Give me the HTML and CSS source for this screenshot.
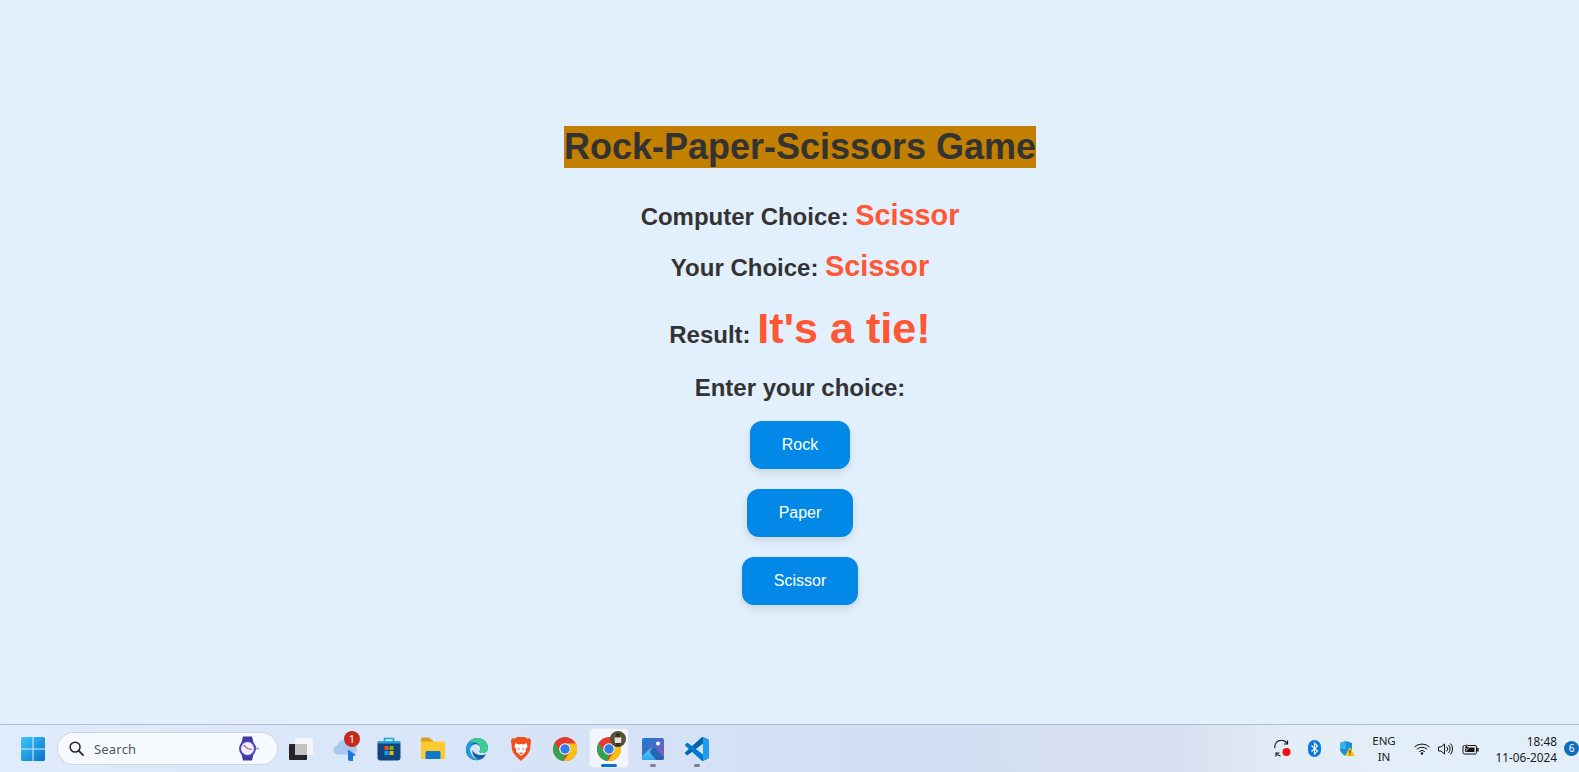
FILE: index.html
```html
<!DOCTYPE html>
<html lang="en">
<head>
<meta charset="utf-8">
<title>Rock-Paper-Scissors Game</title>
<link rel="stylesheet" href="styles.css">
</head>
<body>
<main class="game">
  <h1 class="title">Rock-Paper-Scissors Game</h1>
  <p class="line line-computer">Computer Choice: <span class="val">Scissor</span></p>
  <p class="line line-your">Your Choice: <span class="val">Scissor</span></p>
  <p class="line line-result">Result: <span class="val val-big">It's a tie!</span></p>
  <p class="line line-enter">Enter your choice:</p>
  <div class="buttons">
    <button class="btn">Rock</button>
    <button class="btn">Paper</button>
    <button class="btn">Scissor</button>
  </div>
</main>
<footer class="taskbar">
  <div class="left">
    <svg class="ico start" viewBox="0 0 24 24"><defs><linearGradient id="w" x1="0" y1="0" x2="1" y2="1"><stop offset="0" stop-color="#3cc6f8"/><stop offset="1" stop-color="#0a72cf"/></linearGradient></defs><path fill="url(#w)" d="M0 1.500A1.500 1.500 0 0 1 1.500 0H11.500V11.500H0zM12.500 0H22.500A1.500 1.500 0 0 1 24 1.500V11.500H12.500zM0 12.500H11.500V24H1.500A1.500 1.500 0 0 1 0 22.500zM12.500 12.500H24V22.500A1.500 1.500 0 0 1 22.500 24H12.500z"/></svg>
    <div class="search">
      <svg class="mag" viewBox="0 0 16 16"><circle cx="6.500" cy="6.500" r="5.300" fill="none" stroke="#222" stroke-width="1.600"/><path d="M10.300 10.300 15 15" stroke="#222" stroke-width="1.800" stroke-linecap="round"/></svg>
      <span class="search-text">Search</span>
      <svg class="watch" viewBox="0 0 21 25"><path fill="#3e3a9e" d="M5 .5h9l1.500 6h-12zM3.500 18.500h12L14 24.500H5z"/><circle cx="9.500" cy="12.500" r="8.500" fill="#4a46b8"/><circle cx="9.500" cy="12.500" r="6.500" fill="#f3eefa"/><path d="M5.500 9 9.500 12.500 14 13.500" fill="none" stroke="#c04a80" stroke-width="1.200"/><rect x="18" y="11.500" width="3" height="2" fill="#a5a3e0"/></svg>
    </div>
    <span class="item">
      <svg class="taskview" viewBox="0 0 24 22"><rect x="6" y="0" width="18" height="17" rx="1" fill="#f5f5f7"/><rect x="0" y="6" width="18" height="16" rx="1" fill="#252525"/><path d="M6 6H18V17H6z" fill="#c2c2c4"/></svg>
    </span>
    <span class="item">
      <svg class="ico" viewBox="0 0 24 24"><path fill="#a9c8ef" d="M5 17.500a4.500 4.500 0 0 1-.500-9A7 7 0 0 1 17.500 7a5.300 5.300 0 0 1 2 10.500z"/><path fill="#1d78dc" d="M15 12.500l8 5.500-3 1.200V24h-3a2 2 0 0 1-2-2z"/></svg>
      <span class="notif">1</span>
    </span>
    <span class="item">
      <svg class="ico" viewBox="0 0 24 24"><path fill="none" stroke="#27a4d8" stroke-width="1.600" d="M7.500 5V1.500h9V5"/><rect x="0.500" y="4" width="23" height="19.500" rx="3" fill="#11457e"/><rect x="0.500" y="4" width="23" height="2.500" rx="1" fill="#27a4d8"/><rect x="7.500" y="9" width="4" height="4" fill="#f25022"/><rect x="12.500" y="9" width="4" height="4" fill="#7fba00"/><rect x="7.500" y="14" width="4" height="4" fill="#00a4ef"/><rect x="12.500" y="14" width="4" height="4" fill="#ffb900"/></svg>
    </span>
    <span class="item">
      <svg class="ico" viewBox="0 0 24 24"><path fill="#d9a21a" d="M0 2A1.500 1.500 0 0 1 1.500 .5h6.500l3 2.500H12V7H0z"/><path fill="#fcc92f" d="M0 4.500h22.500A1.500 1.500 0 0 1 24 6V20.500A1.500 1.500 0 0 1 22.500 22H1.500A1.500 1.500 0 0 1 0 20.500z"/><path fill="#0f78c8" d="M4.500 15.500A1.500 1.500 0 0 1 6 14H18a1.500 1.500 0 0 1 1.500 1.500V22h-15z"/></svg>
    </span>
    <span class="item">
      <svg class="ico" viewBox="0 0 24 24"><path fill="#0e64b4" d="M1 13C1 6 5.800 1 12.200 1 18.500 1 23 5.600 23 11c0 3.300-2.600 5-5.200 5-1.800 0-3.400-.700-3.400-1.600 0-.500 1-1 1-2.800 0-2.700-2.200-4.300-4.600-4.300C7.500 7.300 5 9.800 5 13c0 4.500 3.800 9.800 9.800 9.800-1 .300-1.800.400-2.800.400C5.500 23.200 1 18.800 1 13z"/><path fill="#3ccf91" d="M3 6.500C5 3 8.500 1 12.200 1 18.500 1 23 5.600 23 11c0 3.300-2.600 5-5.200 5-1.800 0-3.400-.700-3.400-1.600 0-.500 1-1 1-2.800 0-3.500-3.300-6.800-7.500-6.300C6 5.600 4.300 6 3 6.500z"/><path fill="#1b9de2" d="M3 6.500C5.500 4.700 8 4.800 10 5.500 7 6.200 5 9.300 5 13c0 4.500 3.800 9.800 9.800 9.800C8 24.500 1 19.500 1 13c0-2.500 .800-4.800 2-6.500z"/><path fill="#1a5fa8" d="M14.800 22.800C10 22.500 6.500 17 7.500 13c1 2.500 3.500 4.500 7 5 2.500.300 5 0 6.500-1-1.200 3-3.500 5-6.200 5.800z"/></svg>
    </span>
    <span class="item">
      <svg class="ico" viewBox="0 0 24 24"><path fill="#f1511e" d="M6 1.500 8 0h8l2 1.500 3-.300 1 2.500-1 8.800c-.500 3.500-5 7.800-9 11.500-4-3.700-8.500-8-9-11.500L2 3.700l1-2.500z"/><path fill="#fff" d="M6.500 6 9.500 7.500 12 7l2.500.500L17.500 6l1 3.500-2 3L17 14.500l-3.500 3L12 19l-1.500-1.500-3.500-3 .500-2-2-3z"/><path fill="#f1511e" d="M8.500 10.500l2.500 1.500-1 1zM15.500 10.500l-2.500 1.500 1 1zM10 15.500h4L12 17.500z"/></svg>
    </span>
    <span class="item">
      <svg class="ico" viewBox="0 0 24 24"><circle cx="12" cy="12" r="12" fill="#e53a2e"/><path fill="#fbc112" d="M12 6.500h10.800A12 12 0 0 1 10.700 23.900L16.800 15A5.500 5.500 0 0 0 12 6.500z"/><path fill="#33a352" d="M1.800 5.700 7.200 15A5.500 5.500 0 0 0 12.700 17.500L10.200 23.900A12 12 0 0 1 1.800 5.700z"/><circle cx="12" cy="12" r="5.800" fill="#fff"/><circle cx="12" cy="12" r="4.700" fill="#2e7de8"/></svg>
    </span>
    <span class="item active">
      <svg class="ico" viewBox="0 0 24 24"><circle cx="12" cy="12" r="12" fill="#e53a2e"/><path fill="#fbc112" d="M12 6.500h10.800A12 12 0 0 1 10.700 23.900L16.800 15A5.500 5.500 0 0 0 12 6.500z"/><path fill="#33a352" d="M1.800 5.700 7.200 15A5.500 5.500 0 0 0 12.700 17.500L10.200 23.900A12 12 0 0 1 1.800 5.700z"/><circle cx="12" cy="12" r="5.800" fill="#fff"/><circle cx="12" cy="12" r="4.700" fill="#2e7de8"/></svg>
      <svg class="avatar" viewBox="0 0 16 16"><circle cx="8" cy="8" r="8" fill="#5a5236"/><circle cx="8" cy="4" r="2" fill="#3a2a1e"/><path fill="#e4e2da" d="M4.500 6.500h7L11 12H5z"/><path fill="#333" d="M5.500 12h5v3.500h-5z"/></svg>
      <span class="bar"></span>
    </span>
    <span class="item">
      <svg class="ico" viewBox="0 0 24 24"><defs><linearGradient id="p" x1="0" y1="0" x2="1" y2="1"><stop offset="0" stop-color="#1478d0"/><stop offset="1" stop-color="#8a5cb8"/></linearGradient><linearGradient id="m" x1="0" y1="0" x2="0" y2="1"><stop offset="0" stop-color="#60d8f8"/><stop offset="1" stop-color="#2ca8ea"/></linearGradient></defs><rect x="0" y="0" width="22" height="22" rx="2" fill="url(#p)" transform="translate(1 1)"/><circle cx="17" cy="6.500" r="2" fill="#fff"/><path fill="#2a62b4" d="M8 14 12 9.500 23 20v1a2 2 0 0 1-2 2H12z"/><path fill="url(#m)" d="M1 19 12 9.500 8.500 15 15 23H3a2 2 0 0 1-2-2z"/></svg>
      <span class="dot"></span>
    </span>
    <span class="item">
      <svg class="ico" viewBox="0 0 100 100"><path fill="#0065a9" d="M96.461 10.796L75.857 .876a6.23 6.23 0 0 0-7.107 1.207L1.299 63.583a4.167 4.167 0 0 0 .004 6.162l5.510 5.009a4.167 4.167 0 0 0 5.320.236l81.228-61.620c2.725-2.067 6.639-.124 6.639 3.297v-.24a6.25 6.25 0 0 0-3.539-5.630z"/><path fill="#007acc" d="M96.461 89.204L75.857 99.124a6.23 6.23 0 0 1-7.107-1.207L1.299 36.417a4.167 4.167 0 0 1 .004-6.162l5.510-5.009a4.167 4.167 0 0 1 5.320-.236l81.228 61.620c2.725 2.067 6.639.124 6.639-3.297v.24a6.25 6.25 0 0 1-3.539 5.630z"/><path fill="#1f9cf0" d="M75.858 99.126a6.232 6.232 0 0 1-7.108-1.210c2.306 2.307 6.250.673 6.250-2.590V4.674c0-3.263-3.944-4.897-6.250-2.590a6.232 6.232 0 0 1 7.108-1.210l20.600 9.906A6.250 6.250 0 0 1 100 16.413v67.174a6.250 6.250 0 0 1-3.542 5.633z"/></svg>
      <span class="dot"></span>
    </span>
  </div>
  <div class="tray">
    <svg class="sync" viewBox="0 0 17 17"><path fill="none" stroke="#111" stroke-width="1.200" d="M1 8A6.500 6.500 0 0 1 13 3.500M2.500 13.500a6.500 6.500 0 0 0 4 2.500"/><path fill="none" stroke="#111" stroke-width="1.200" d="M13.500 .5V4H10M2 16.500V13H5.500"/><circle cx="12.500" cy="12" r="4" fill="#ee1010"/></svg>
    <svg class="bt" viewBox="0 0 13 17"><rect width="13" height="17" rx="6.500" fill="#0b78e0"/><path fill="none" stroke="#fff" stroke-width="1.100" d="M3.500 5.500l6 5.500L6.500 14V3l3 3L3.500 11.500"/></svg>
    <svg class="shield" viewBox="0 0 16 17"><path fill="#1e8fd6" d="M7 1 13 3V9c0 3-3 6-6 7-3-1-6-4-6-7V3z"/><path fill="#2fb4ea" d="M7 1 1 3V9H7z"/><path fill="#f8c418" d="M11 7l5 9H6z"/><path stroke="#222" stroke-width="1" d="M11 10v3.500M11 14.300v1"/></svg>
    <div class="lang"><span>ENG</span><span>IN</span></div>
    <svg class="sys-ico wifi" viewBox="0 0 16 12"><g fill="none" stroke="#111" stroke-width="1"><path d="M.5 4a11 11 0 0 1 15 0M2.800 6.300a7.700 7.700 0 0 1 10.400 0M5.200 8.600a4.200 4.200 0 0 1 5.600 0"/></g><circle cx="8" cy="10.500" r="1.200" fill="#111"/></svg>
    <svg class="sys-ico speaker" viewBox="0 0 16 12"><g fill="none" stroke="#111" stroke-width="1"><path d="M.5 4H3L6.500 1V11L3 8H.5z"/><path d="M8.500 3.500a3.500 3.500 0 0 1 0 5M10.500 2a6 6 0 0 1 0 8M12.500 .5a8.500 8.500 0 0 1 0 11"/></g></svg>
    <svg class="sys-ico battery" viewBox="0 0 17 12"><rect x="1" y="2.500" width="13.500" height="8.500" rx="1.500" fill="#e6eff9" stroke="#111"/><rect x="3" y="4.500" width="9.500" height="4.500" fill="#111"/><rect x="15.200" y="5" width="1.500" height="3.500" fill="#111"/><path d="M5 0 2.500 5.500H5L4 8.500 7.500 4H5.500z" fill="#111" stroke="#e6eff9" stroke-width=".5"/></svg>
    <div class="clock"><span>18:48</span><span>11-06-2024</span></div>
    <span class="badge">6</span>
  </div>
</footer>
</body>
</html>
```
FILE: styles.css
```css
* { box-sizing: border-box; }
html, body { height: 100%; }
body {
  margin: 0;
  height: 772px;
  overflow: hidden;
  display: flex;
  flex-direction: column;
  background: #e2effd;
  font-family: "Liberation Sans", Arial, sans-serif;
  color: #333;
}
.game {
  flex: 1;
  min-height: 0;
  display: flex;
  flex-direction: column;
  align-items: center;
  padding: 126px 0 0 21px;
}
.title {
  margin: 0 0 30px;
  font-size: 36px;
  line-height: 42px;
  font-weight: bold;
  color: #333;
  background: #c27f00;
}
.line {
  margin: 0;
  font-size: 24px;
  font-weight: bold;
  text-align: center;
}
.line-computer { line-height: 34px; margin-bottom: 15px; }
.line-your { line-height: 34px; margin-bottom: 19px; }
.line-result { line-height: 48px; margin-bottom: 15px; }
.line-enter { line-height: 28px; margin-bottom: 19px; }
.val { font-size: 28.8px; color: #ff5733; }
.val-big { font-size: 43.2px; }
.buttons {
  display: flex;
  flex-direction: column;
  align-items: center;
  gap: 20px;
}
.btn {
  border: 0;
  padding: 15px 32px;
  height: 48px;
  border-radius: 12px;
  background: #0288e6;
  color: #fff;
  font: 16px/18px "Liberation Sans", Arial, sans-serif;
  box-shadow: 0 4px 8px rgba(0, 0, 0, .1);
}
.taskbar {
  height: 48px;
  flex: none;
  display: flex;
  justify-content: space-between;
  align-items: center;
  border-top: 1px solid #b4bccb;
  background: linear-gradient(90deg, #e0ecfb 0%, #d8e5f8 30%, #d3def3 55%, #d6dff0 74%, #e2edf7 82%, #e2eefa 100%);
  font-family: "Noto Sans", "Open Sans", sans-serif;
  color: #1a1a1a;
}
.left {
  display: flex;
  align-items: center;
  padding-left: 21px;
}
.ico { width: 24px; height: 24px; display: block; flex: none; }
.start { margin-right: 13px; }
.search {
  width: 219px;
  height: 31px;
  display: flex;
  align-items: center;
  padding: 0 18px 0 11px;
  margin-right: 2px;
  border-radius: 16px;
  background: #f6faff;
  box-shadow: 0 0 0 1px #cdd6e6;
}
.mag { width: 15px; height: 15px; margin-right: 10px; flex: none; }
.search-text { flex: 1; font-size: 13px; color: #555; letter-spacing: .2px; }
.watch { width: 21px; height: 25px; flex: none; }
.taskview { width: 24px; height: 22px; display: block; }
.item {
  position: relative;
  width: 44px;
  height: 47px;
  display: flex;
  align-items: center;
  justify-content: center;
  flex: none;
}
.notif {
  position: absolute;
  top: 6px;
  right: 7px;
  width: 16px;
  height: 16px;
  border-radius: 50%;
  background: #c42b1c;
  color: #fff;
  font-size: 11px;
  line-height: 16px;
  text-align: center;
}
.active::before {
  content: "";
  position: absolute;
  left: 3px;
  top: 4px;
  width: 38px;
  height: 38px;
  background: #f1f6fe;
  border-radius: 4px;
  box-shadow: 0 0 0 1px #dfe7f4;
}
.active .ico { position: relative; }
.avatar {
  position: absolute;
  top: 6px;
  right: 5px;
  width: 16px;
  height: 16px;
}
.bar {
  position: absolute;
  bottom: 5px;
  left: 14px;
  width: 16px;
  height: 3px;
  border-radius: 2px;
  background: #0f6cc8;
}
.dot {
  position: absolute;
  bottom: 5px;
  left: 19px;
  width: 6px;
  height: 3px;
  border-radius: 2px;
  background: #7b8190;
}
.tray {
  display: flex;
  align-items: center;
}
.tray svg { display: block; flex: none; }
.sync { width: 17px; height: 17px; margin-right: 17px; }
.bt { width: 13px; height: 17px; margin-right: 18px; }
.shield { width: 16px; height: 17px; margin-right: 16px; }
.lang {
  display: flex;
  flex-direction: column;
  align-items: center;
  width: 26px;
  font-size: 11.5px;
  line-height: 16px;
  margin-right: 17px;
}
.sys-ico { width: 16px; height: 12px; }
.wifi, .speaker { margin-right: 8px; }
.battery { width: 17px; margin-right: 16px; }
.clock {
  display: flex;
  flex-direction: column;
  align-items: flex-end;
  width: 62px;
  font-size: 11.8px;
  line-height: 16px;
  white-space: nowrap;
  margin-right: 7px;
}
.badge {
  width: 15px;
  height: 15px;
  border-radius: 50%;
  background: #0f6cbd;
  color: #fff;
  font-size: 10px;
  line-height: 15px;
  text-align: center;
  flex: none;
}
```
